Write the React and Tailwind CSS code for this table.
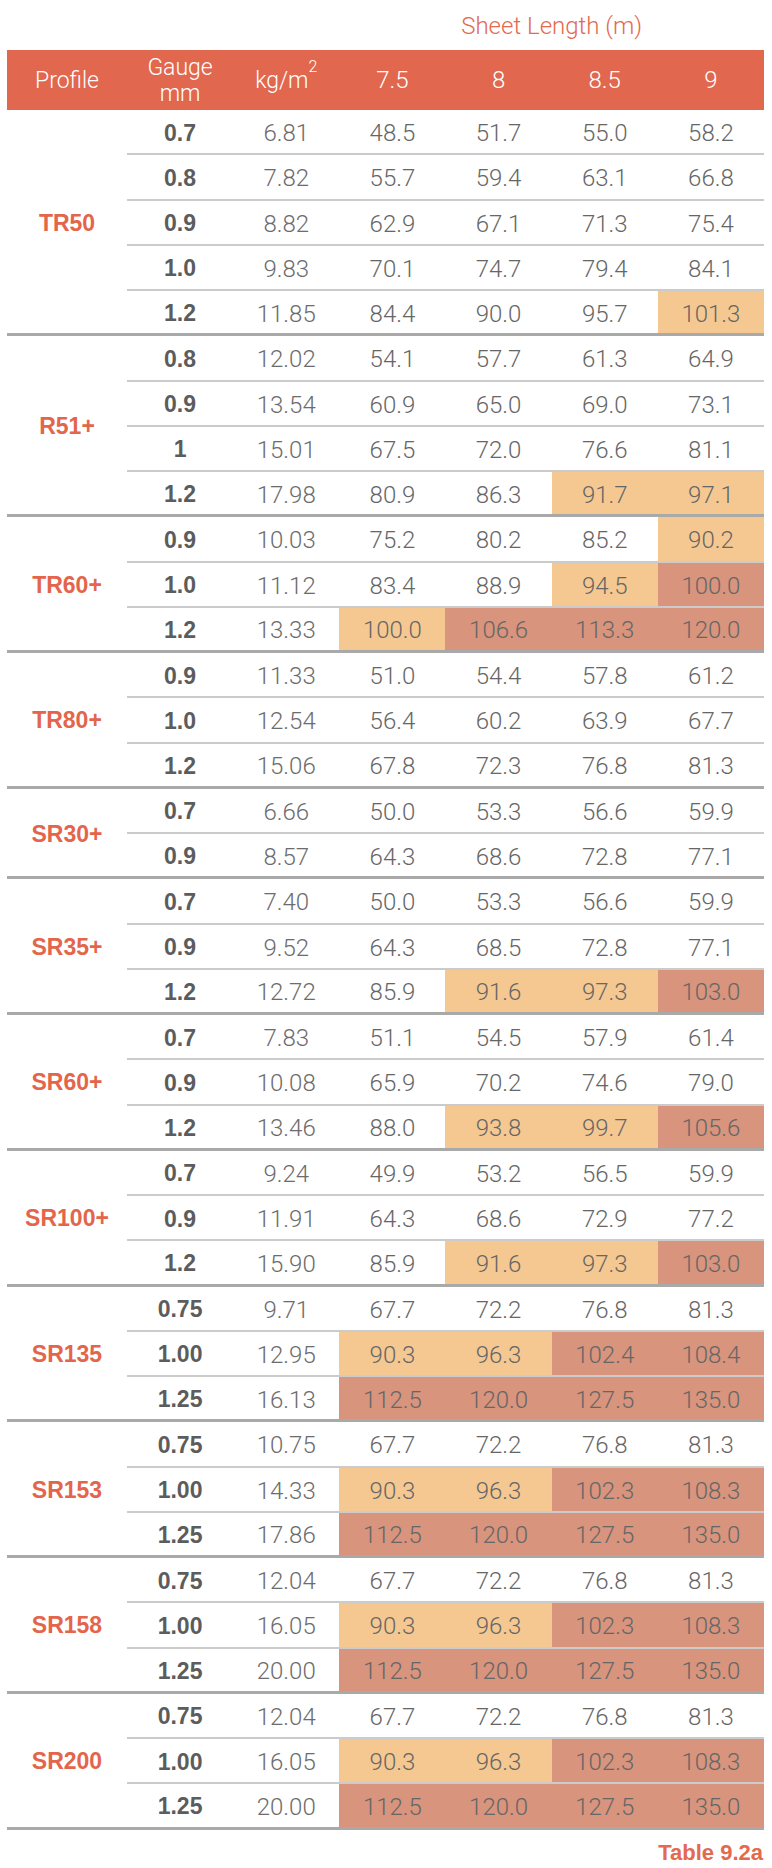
const groups = [
    {
        profile: 'TR50',
        rows: [
            ['0.7', '6.81', ['48.5', '51.7', '55.0', '58.2'], '....'],
            ['0.8', '7.82', ['55.7', '59.4', '63.1', '66.8'], '....'],
            ['0.9', '8.82', ['62.9', '67.1', '71.3', '75.4'], '....'],
            ['1.0', '9.83', ['70.1', '74.7', '79.4', '84.1'], '....'],
            ['1.2', '11.85', ['84.4', '90.0', '95.7', '101.3'], '...o'],
        ],
    },
    {
        profile: 'R51+',
        rows: [
            ['0.8', '12.02', ['54.1', '57.7', '61.3', '64.9'], '....'],
            ['0.9', '13.54', ['60.9', '65.0', '69.0', '73.1'], '....'],
            ['1', '15.01', ['67.5', '72.0', '76.6', '81.1'], '....'],
            ['1.2', '17.98', ['80.9', '86.3', '91.7', '97.1'], '..oo'],
        ],
    },
    {
        profile: 'TR60+',
        rows: [
            ['0.9', '10.03', ['75.2', '80.2', '85.2', '90.2'], '...o'],
            ['1.0', '11.12', ['83.4', '88.9', '94.5', '100.0'], '..or'],
            ['1.2', '13.33', ['100.0', '106.6', '113.3', '120.0'], 'orrr'],
        ],
    },
    {
        profile: 'TR80+',
        rows: [
            ['0.9', '11.33', ['51.0', '54.4', '57.8', '61.2'], '....'],
            ['1.0', '12.54', ['56.4', '60.2', '63.9', '67.7'], '....'],
            ['1.2', '15.06', ['67.8', '72.3', '76.8', '81.3'], '....'],
        ],
    },
    {
        profile: 'SR30+',
        rows: [
            ['0.7', '6.66', ['50.0', '53.3', '56.6', '59.9'], '....'],
            ['0.9', '8.57', ['64.3', '68.6', '72.8', '77.1'], '....'],
        ],
    },
    {
        profile: 'SR35+',
        rows: [
            ['0.7', '7.40', ['50.0', '53.3', '56.6', '59.9'], '....'],
            ['0.9', '9.52', ['64.3', '68.5', '72.8', '77.1'], '....'],
            ['1.2', '12.72', ['85.9', '91.6', '97.3', '103.0'], '.oor'],
        ],
    },
    {
        profile: 'SR60+',
        rows: [
            ['0.7', '7.83', ['51.1', '54.5', '57.9', '61.4'], '....'],
            ['0.9', '10.08', ['65.9', '70.2', '74.6', '79.0'], '....'],
            ['1.2', '13.46', ['88.0', '93.8', '99.7', '105.6'], '.oor'],
        ],
    },
    {
        profile: 'SR100+',
        rows: [
            ['0.7', '9.24', ['49.9', '53.2', '56.5', '59.9'], '....'],
            ['0.9', '11.91', ['64.3', '68.6', '72.9', '77.2'], '....'],
            ['1.2', '15.90', ['85.9', '91.6', '97.3', '103.0'], '.oor'],
        ],
    },
    {
        profile: 'SR135',
        rows: [
            ['0.75', '9.71', ['67.7', '72.2', '76.8', '81.3'], '....'],
            ['1.00', '12.95', ['90.3', '96.3', '102.4', '108.4'], 'oorr'],
            ['1.25', '16.13', ['112.5', '120.0', '127.5', '135.0'], 'rrrr'],
        ],
    },
    {
        profile: 'SR153',
        rows: [
            ['0.75', '10.75', ['67.7', '72.2', '76.8', '81.3'], '....'],
            ['1.00', '14.33', ['90.3', '96.3', '102.3', '108.3'], 'oorr'],
            ['1.25', '17.86', ['112.5', '120.0', '127.5', '135.0'], 'rrrr'],
        ],
    },
    {
        profile: 'SR158',
        rows: [
            ['0.75', '12.04', ['67.7', '72.2', '76.8', '81.3'], '....'],
            ['1.00', '16.05', ['90.3', '96.3', '102.3', '108.3'], 'oorr'],
            ['1.25', '20.00', ['112.5', '120.0', '127.5', '135.0'], 'rrrr'],
        ],
    },
    {
        profile: 'SR200',
        rows: [
            ['0.75', '12.04', ['67.7', '72.2', '76.8', '81.3'], '....'],
            ['1.00', '16.05', ['90.3', '96.3', '102.3', '108.3'], 'oorr'],
            ['1.25', '20.00', ['112.5', '120.0', '127.5', '135.0'], 'rrrr'],
        ],
    },
];

const fills = {
    '.': 'bg-white',
    o: 'bg-[#f5c892]',
    r: 'bg-[#d8947d]',
};

const gridCols = 'grid grid-cols-[120px_repeat(6,minmax(0,1fr))]';
const boldFont = "font-['Liberation_Sans',Arial,sans-serif] font-bold";

export default function App() {
    return (
        <div className="w-[772px] min-h-[1868px] bg-white font-['Roboto','Liberation_Sans',Arial,sans-serif] font-light text-[23px] leading-none">
            <div className="ml-[7px] w-[757px]">
                {/* Title */}
                <div className={`${gridCols} h-[50px] items-center`}>
                    <div className="col-start-4 col-span-4 text-center text-[#e3694f] text-[24px] pt-[2px]">
                        Sheet Length (m)
                    </div>
                </div>

                {/* Header */}
                <div className={`${gridCols} h-[60px] bg-[#e1674f] text-white items-center text-center`}>
                    <div>Profile</div>
                    <div className="leading-[26px] pt-[2px]">
                        Gauge
                        <br />
                        mm
                    </div>
                    <div>
                        kg/m<sup className="text-[16px] align-[8px]">2</sup>
                    </div>
                    <div className="text-[24px]">7.5</div>
                    <div className="text-[24px]">8</div>
                    <div className="text-[24px]">8.5</div>
                    <div className="text-[24px]">9</div>
                </div>

                {groups.map((group) => (
                    <Group key={group.profile} group={group} />
                ))}

                <div className="flex justify-end pt-[12px] pr-[1px]">
                    <span className={`${boldFont} text-[#e3694f] text-[22px]`}>Table 9.2a</span>
                </div>
            </div>
        </div>
    );
}

function Group({ group }) {
    const n = group.rows.length;

    return (
        <div className={`${gridCols} border-b-[3px] border-[#a9a9a9]`}>
            <div
                className={`col-start-1 flex items-center justify-center ${boldFont} text-[#e3654b] pt-[3px]`}
                style={{ gridRow: `1 / span ${n}` }}
            >
                {group.profile}
            </div>
            {group.rows.map((row, i) => {
                const last = i === n - 1;
                const cell = `flex items-center justify-center pt-[3px] ${
                    last ? 'h-[42.25px]' : 'h-[45.25px] border-b-2 border-[#cbcbcb]'
                }`;
                return [
                    <div key={`g${i}`} className={`${cell} col-start-2 bg-white ${boldFont} text-[#5c5c5c]`}>
                        {row[0]}
                    </div>,
                    <div key={`k${i}`} className={`${cell} bg-white text-[24px] text-[#6c6c6c]`}>
                        {row[1]}
                    </div>,
                    ...row[2].map((v, j) => (
                        <div key={`v${i}-${j}`} className={`${cell} ${fills[row[3][j]]} text-[24px] text-[#666666]`}>
                            {v}
                        </div>
                    )),
                ];
            })}
        </div>
    );
}
